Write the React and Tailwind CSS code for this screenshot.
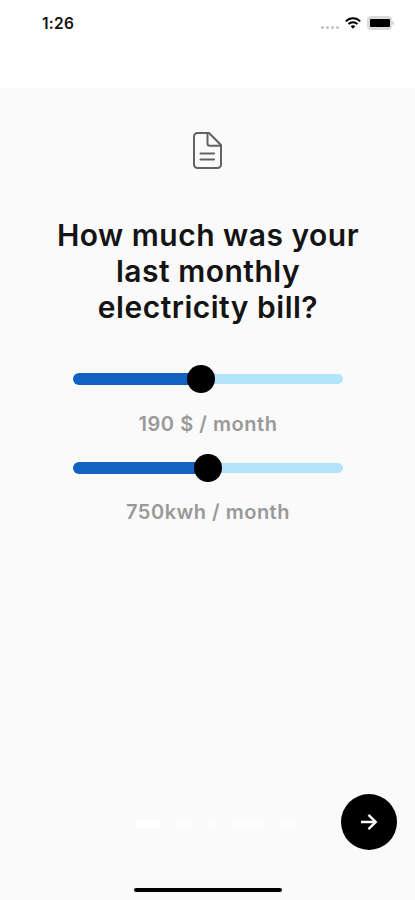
import { useState } from "react";

const STEPS = [
  { id: 1, className: "w-[26px] bg-white" },
  { id: 2, className: "w-4 bg-[#fcfcfc]" },
  { id: 3, className: "w-2 bg-[#fcfcfc]" },
  { id: 4, className: "w-8 bg-[#fcfcfc]" },
  { id: 5, className: "w-4 bg-[#fcfcfc]" },
];

const WifiIcon = () => (
  <svg
    width="16"
    height="12"
    viewBox="0 0 16 12"
    fill="none"
    stroke="black"
    strokeWidth="2"
  >
    <path d="M0.8 4.4C4.8 0.3 11.2 0.3 15.2 4.4" />
    <path d="M3.5 7.1C6 4.6 10 4.6 12.5 7.1" />
    <path d="M5.7 9.3C7 8 9 8 10.3 9.3L8 11.7Z" fill="black" stroke="none" />
  </svg>
);

const BatteryIcon = () => (
  <svg width="28" height="14" viewBox="0 0 28 14">
    <rect x="0" y="0" width="25" height="14" rx="4" fill="#dadada" />
    <rect x="3" y="3" width="20" height="8" rx="1" fill="black" />
    <path d="M25.5 4.5C27.6 5.3 27.6 8.7 25.5 9.5Z" fill="#c8c8c8" />
  </svg>
);

const StatusBar = () => (
  <header className="h-[88px] bg-white flex items-start justify-between pt-4 pl-[42px] pr-5">
    <span className="text-[15.5px] leading-4 font-semibold tracking-[0.3px] text-[#111111]">
      1:26
    </span>
    <div className="flex items-center">
      <div className="flex gap-[2px] mt-2 mr-[6px]">
        <span className="size-[3px] rounded-full bg-[#c2c2c2]" />
        <span className="size-[3px] rounded-full bg-[#c2c2c2]" />
        <span className="size-[3px] rounded-full bg-[#c2c2c2]" />
        <span className="size-[3px] rounded-full bg-[#c2c2c2]" />
      </div>
      <WifiIcon />
      <div className="ml-[6px]">
        <BatteryIcon />
      </div>
    </div>
  </header>
);

const DocumentIcon = () => (
  <svg
    width="29"
    height="37"
    viewBox="0 0 29 37"
    fill="none"
    stroke="#626262"
    strokeWidth="2"
    strokeLinecap="round"
    strokeLinejoin="round"
  >
    <path d="M4.5 1H16L28 13V32.5A3.5 3.5 0 0 1 24.5 36H4.5A3.5 3.5 0 0 1 1 32.5V4.5A3.5 3.5 0 0 1 4.5 1Z" />
    <path d="M14.5 1V11.5A2.3 2.3 0 0 0 16.8 13.8H28" />
    <path d="M7.5 21.5H21M7.5 27.5H21" />
  </svg>
);

const Slider = ({ label, value, max, onChange }) => {
  const percent = (value / max) * 100;

  return (
    <div className="relative h-7 w-[270px] flex items-center">
      <div
        className="h-3 shrink-0 rounded-l-full bg-[#1262c2]"
        style={{ width: `${percent}%` }}
      />
      <div className="h-[10px] flex-1 rounded-r-full bg-[#b2e5fc]" />
      <span
        className="absolute size-7 -translate-x-1/2 rounded-full bg-black"
        style={{ left: `${percent}%` }}
      />
      <input
        type="range"
        aria-label={label}
        min="0"
        max={max}
        value={value}
        onChange={(e) => onChange(Number(e.target.value))}
        className="absolute inset-0 w-full opacity-0 cursor-pointer"
      />
    </div>
  );
};

const App = () => {
  const [cost, setCost] = useState(190);
  const [usage, setUsage] = useState(750);

  return (
    <div className="w-full h-[900px] flex flex-col overflow-hidden bg-[#fafafa] font-['Inter',sans-serif]">
      <StatusBar />

      <main className="flex-1 flex flex-col items-center pt-[44px]">
        <DocumentIcon />

        <h1 className="mt-[48px] w-[330px] pl-px text-center text-[30px] leading-9 font-semibold tracking-[0.5px] text-[#141414]">
          How much was your last monthly electricity bill?
        </h1>

        <div className="mt-[40px] flex flex-col items-center">
          <Slider label="Cost" value={cost} max={400} onChange={setCost} />
          <p className="mt-[19px] pl-px text-xl leading-6 font-semibold tracking-[0.55px] text-[#999999]">
            {cost} $ / month
          </p>
        </div>

        <div className="mt-[18px] flex flex-col items-center">
          <Slider label="Usage" value={usage} max={1500} onChange={setUsage} />
          <p className="mt-[18px] pl-px text-xl leading-6 font-semibold tracking-[0.5px] text-[#999999]">
            {usage}kwh / month
          </p>
        </div>
      </main>

      <footer className="h-[106px] flex flex-col justify-between pb-2">
        <div className="flex items-center justify-between pl-[135px] pr-[18px]">
          <div className="flex items-center gap-4 mt-1">
            {STEPS.map((step) => (
              <span key={step.id} className={`h-2 ${step.className}`} />
            ))}
          </div>
          <button
            aria-label="Next"
            className="size-14 rounded-full bg-black flex items-center justify-center cursor-pointer"
          >
            <svg
              width="18"
              height="18"
              viewBox="0 0 18 18"
              fill="none"
              stroke="white"
              strokeWidth="2.4"
            >
              <path d="M1 9H16M8.5 1.8L15.7 9L8.5 16.2" />
            </svg>
          </button>
        </div>
        <div className="h-1 w-[148px] self-center rounded-full bg-black" />
      </footer>
    </div>
  );
};

export default App;
